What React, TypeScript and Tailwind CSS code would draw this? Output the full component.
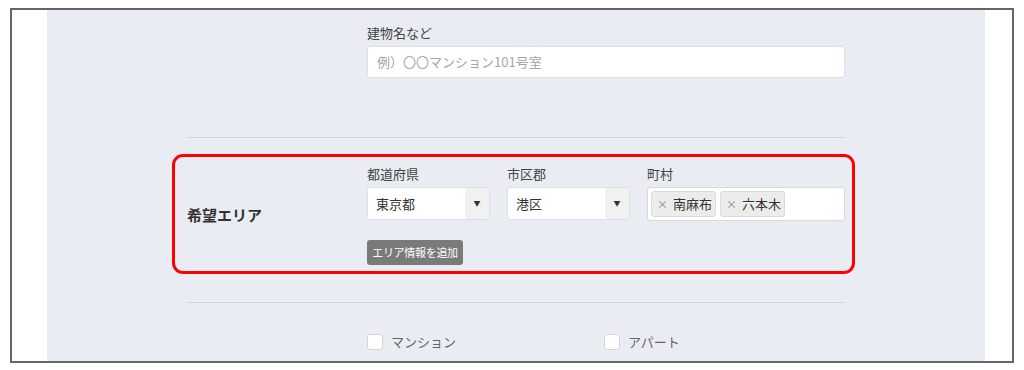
export default function App() {
  const font = { fontFamily: '"Noto Sans CJK JP", "Noto Sans", sans-serif' };

  return (
    <div className="w-[1024px] h-[370px] bg-white pt-[8px] pl-[10px]" style={font}>
      {/* Screenshot frame */}
      <div className="w-[1004px] h-[355px] border-2 border-[#666] flex overflow-hidden">
        <div className="w-[35px] shrink-0 bg-white" />

        {/* Form panel */}
        <div className="w-[938px] shrink-0 bg-[#e9ecf3] pl-[140px] pt-[14px]">
          <div className="w-[658px]">
            {/* Building name row */}
            <div className="flex">
              <div className="w-[180px] shrink-0" />
              <div className="w-[478px]">
                <div className="text-[13px] leading-[18px] text-[#444] mb-[4px]">建物名など</div>
                <div className="h-[32px] bg-white border border-[#dcdfe4] rounded-[3px] flex items-center px-[9px] text-[13px] text-[#a5a5a5]">
                  例）〇〇マンション101号室
                </div>
              </div>
            </div>

            <div className="h-px bg-[#d2d5db] mt-[59px]" />

            {/* Area row, marked with red frame */}
            <div className="mt-[16px] -ml-[15px] -mr-[10px] border-[3px] border-[#ff0000] rounded-[11px] pl-[12px] pt-[8px] pb-[6px] flex items-center">
              <div className="w-[180px] shrink-0 text-[15px] font-bold text-[#333]">希望エリア</div>
              <div className="w-[478px]">
                <div className="flex gap-[17px]">
                  <div className="w-[123px]">
                    <div className="text-[13px] leading-[18px] text-[#444] mb-[4px]">都道府県</div>
                    <div className="h-[33px] bg-white border border-[#dcdfe4] rounded-[3px] flex overflow-hidden">
                      <div className="flex-1 flex items-center pl-[8px] text-[13px] text-[#333]">東京都</div>
                      <div className="w-[24px] bg-[#f1f1f1] flex items-center justify-center text-[7px] text-[#333]">▼</div>
                    </div>
                  </div>
                  <div className="w-[123px]">
                    <div className="text-[13px] leading-[18px] text-[#444] mb-[4px]">市区郡</div>
                    <div className="h-[33px] bg-white border border-[#dcdfe4] rounded-[3px] flex overflow-hidden">
                      <div className="flex-1 flex items-center pl-[8px] text-[13px] text-[#333]">港区</div>
                      <div className="w-[24px] bg-[#f1f1f1] flex items-center justify-center text-[7px] text-[#333]">▼</div>
                    </div>
                  </div>
                  <div className="w-[198px]">
                    <div className="text-[13px] leading-[18px] text-[#444] mb-[4px]">町村</div>
                    <div className="h-[34px] bg-white border border-[#d6d9de] rounded-[3px] flex items-center gap-[4px] px-[3px]">
                      {['南麻布', '六本木'].map((t) => (
                        <div key={t} className="h-[26px] bg-[#ececec] border border-[#dadada] rounded-[3px] flex items-center gap-[5px] pl-[5px] pr-[3px]">
                          <span className="text-[11px] text-[#888]">×</span>
                          <span className="text-[13px] text-[#333]">{t}</span>
                        </div>
                      ))}
                    </div>
                  </div>
                </div>
                <button className="mt-[19px] w-[96px] h-[25px] flex items-center justify-center bg-[#7a7a7a] rounded-[3px] text-[11px] tracking-[-0.3px] text-white">
                  エリア情報を追加
                </button>
              </div>
            </div>

            <div className="h-px bg-[#d2d5db] mt-[28px]" />

            {/* Property type row */}
            <div className="flex mt-[29px]">
              <div className="w-[180px] shrink-0" />
              <div className="w-[478px] flex">
                <div className="w-[237px] flex items-center gap-[8px]">
                  <div className="w-[16px] h-[16px] bg-white border border-[#d4d4d4] rounded-[3px]" />
                  <span className="text-[13px] text-[#666]">マンション</span>
                </div>
                <div className="flex items-center gap-[8px]">
                  <div className="w-[16px] h-[16px] bg-white border border-[#d4d4d4] rounded-[3px]" />
                  <span className="text-[13px] text-[#666]">アパート</span>
                </div>
              </div>
            </div>
          </div>
        </div>

        <div className="flex-1 bg-white" />
      </div>
    </div>
  );
}
